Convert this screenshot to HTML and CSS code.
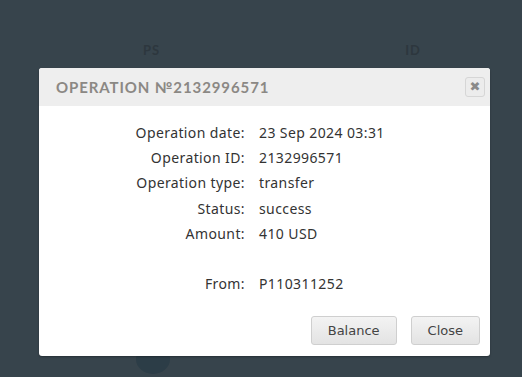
FILE: index.html
```html
<!DOCTYPE html>
<html lang="en">
<head>
  <meta charset="UTF-8">
  <title>Operation</title>
  <link rel="stylesheet" href="styles.css">
</head>
<body>
  <div class="page">
    <div class="thead"><span class="th ps">PS</span><span class="th id">ID</span></div>
    <div class="dot"></div>
  </div>

  <div class="modal">
    <div class="modal-head">
      <h2>Operation №2132996571</h2>
      <button class="x">&#10006;</button>
    </div>
    <div class="modal-body">
      <dl class="info">
        <dt>Operation date:</dt><dd>23 Sep 2024 03:31</dd>
        <dt>Operation ID:</dt><dd>2132996571</dd>
        <dt>Operation type:</dt><dd>transfer</dd>
        <dt>Status:</dt><dd>success</dd>
        <dt>Amount:</dt><dd>410 USD</dd>
        <dt class="gap"></dt><dd class="gap"></dd>
        <dt>From:</dt><dd>P110311252</dd>
      </dl>
    </div>
    <div class="modal-foot">
      <button class="btn">Balance</button>
      <button class="btn">Close</button>
    </div>
  </div>
</body>
</html>
```

FILE: styles.css
```css
* { margin:0; padding:0; box-sizing:border-box }
body {
  background:#37444c; width:522px; height:377px; overflow:hidden;
  font-family:'Noto Sans',sans-serif;
}
.page { position:relative; height:377px; }
.thead { display:flex; padding-top:42px; }
.th { font-family:'Lato',sans-serif; font-weight:700; font-size:13px; color:#2d373e; letter-spacing:1px; }
.th.ps { margin-left:143px; }
.th.id { margin-left:245px; }
.dot { position:absolute; left:136px; top:344px; width:34px; height:30px; border-radius:50%; background:#2c3d47; }

.modal {
  position:absolute; left:39px; top:68px; width:451px; height:288px;
  background:#fff; border-radius:3px; overflow:hidden;
  box-shadow:0 1px 2px rgba(0,0,0,.3);
}
.modal-head {
  background:#eeeeee; height:38px; display:flex; align-items:center;
  justify-content:space-between; padding:0 5px 0 17px;
}
.modal-head h2 {
  font-family:'Lato',sans-serif; font-weight:700; font-size:15px;
  letter-spacing:0.9px; text-transform:uppercase; color:#8b8884;
}
.x {
  width:20px; height:20px; border:1px solid #d6d6d6; border-radius:3px;
  background:#ececec; color:#8a8a8a; font-size:13px; line-height:18px;
  font-family:'DejaVu Sans',sans-serif;
}
.modal-body { padding:14px 0 0; height:210px; }
.info {
  display:grid; grid-template-columns:206px 1fr; column-gap:14px;
  font-size:14px; letter-spacing:0.4px; line-height:25.2px; color:#333;
}
.info dt { text-align:right; }
.info .gap { height:25px; }
.modal-foot { display:flex; justify-content:flex-end; gap:14px; padding:0 10px 0 0; }
.btn {
  font-family:'DejaVu Sans',sans-serif; font-size:13px; color:#444;
  height:29px; padding:0 16px; border:1px solid #cfcfcf; border-radius:3px;
  background:linear-gradient(#f3f3f3,#e3e3e3);
}
```
